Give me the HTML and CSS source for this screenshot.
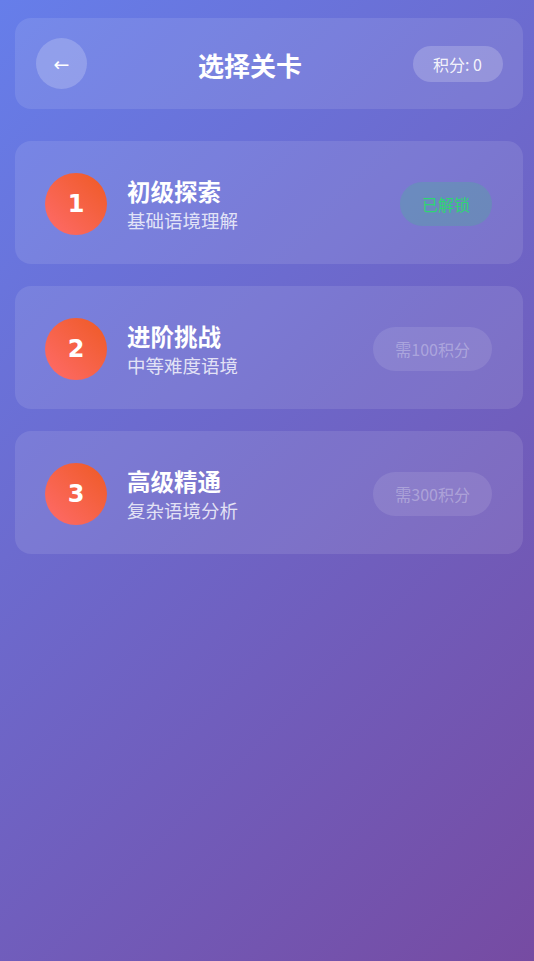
FILE: index.html
```html
<!DOCTYPE html>
<html lang="zh-CN">
<head>
<meta charset="utf-8">
<title>选择关卡</title>
<link rel="stylesheet" href="styles.css">
</head>
<body>
<div class="page">
  <header class="header">
    <button class="back">←</button>
    <h1 class="title">选择关卡</h1>
    <div class="points">积分: 0</div>
  </header>
  <div class="levels">
    <div class="level">
      <div class="num">1</div>
      <div class="info">
        <div class="name">初级探索</div>
        <div class="desc">基础语境理解</div>
      </div>
      <div class="badge unlocked">已解锁</div>
    </div>
    <div class="level">
      <div class="num">2</div>
      <div class="info">
        <div class="name">进阶挑战</div>
        <div class="desc">中等难度语境</div>
      </div>
      <div class="badge locked">需100积分</div>
    </div>
    <div class="level">
      <div class="num">3</div>
      <div class="info">
        <div class="name">高级精通</div>
        <div class="desc">复杂语境分析</div>
      </div>
      <div class="badge locked">需300积分</div>
    </div>
  </div>
</div>
</body>
</html>
```
FILE: styles.css
```css
html, body {
  margin: 0;
  padding: 0;
  height: 100%;
}
body {
  background: linear-gradient(135deg, #667eea 0%, #764ba2 100%);
  font-family: "Noto Sans CJK SC", "Noto Sans", sans-serif;
  color: #fff;
}
.page {
  padding: 18px 11px 0 15px;
}
.header {
  display: flex;
  align-items: center;
  justify-content: space-between;
  height: 91px;
  box-sizing: border-box;
  padding: 0 20px 0 21px;
  background: rgba(255,255,255,0.1);
  border-radius: 16px;
}
.back {
  width: 51px;
  height: 51px;
  border-radius: 50%;
  border: none;
  background: rgba(255,255,255,0.2);
  color: #fff;
  font-size: 19px;
  font-family: "DejaVu Sans", sans-serif;
  padding: 0;
  display: flex;
  align-items: center;
  justify-content: center;
}
.title {
  margin: 3px 0 0 0;
  font-size: 26px;
  font-weight: 700;
  line-height: 1;
}
.points {
  background: rgba(255,255,255,0.2);
  border-radius: 18px;
  height: 36px;
  box-sizing: border-box;
  padding: 0 21px 0 20px;
  display: flex;
  align-items: center;
  font-size: 16px;
  color: rgba(255,255,255,0.9);
}
.levels {
  display: flex;
  flex-direction: column;
  gap: 22px;
  margin-top: 32px;
}
.level {
  display: flex;
  align-items: center;
  height: 123px;
  box-sizing: border-box;
  padding: 0 31px 0 30px;
  background: rgba(255,255,255,0.1);
  border-radius: 16px;
}
.num {
  width: 62px;
  height: 62px;
  border-radius: 50%;
  background: linear-gradient(45deg, #ff6b6b, #ee5a24);
  display: flex;
  align-items: center;
  justify-content: center;
  font-family: "DejaVu Sans", sans-serif;
  font-weight: 700;
  font-size: 24px;
  flex-shrink: 0;
  margin-top: 2px;
}
.info {
  flex: 1;
  margin-left: 20px;
  margin-top: 3px;
}
.name {
  font-size: 23.5px;
  font-weight: 700;
  line-height: 30px;
}
.desc {
  margin-top: 2px;
  font-size: 18.5px;
  line-height: 25px;
  color: rgba(255,255,255,0.8);
}
.badge {
  height: 44px;
  box-sizing: border-box;
  padding: 0 22px;
  border-radius: 22px;
  display: flex;
  align-items: center;
  font-size: 16px;
  margin-top: 2px;
}
.unlocked {
  background: rgba(46,213,115,0.2);
  color: #2ed573;
}
.locked {
  background: rgba(255,255,255,0.1);
  color: rgba(255,255,255,0.3);
}
```
